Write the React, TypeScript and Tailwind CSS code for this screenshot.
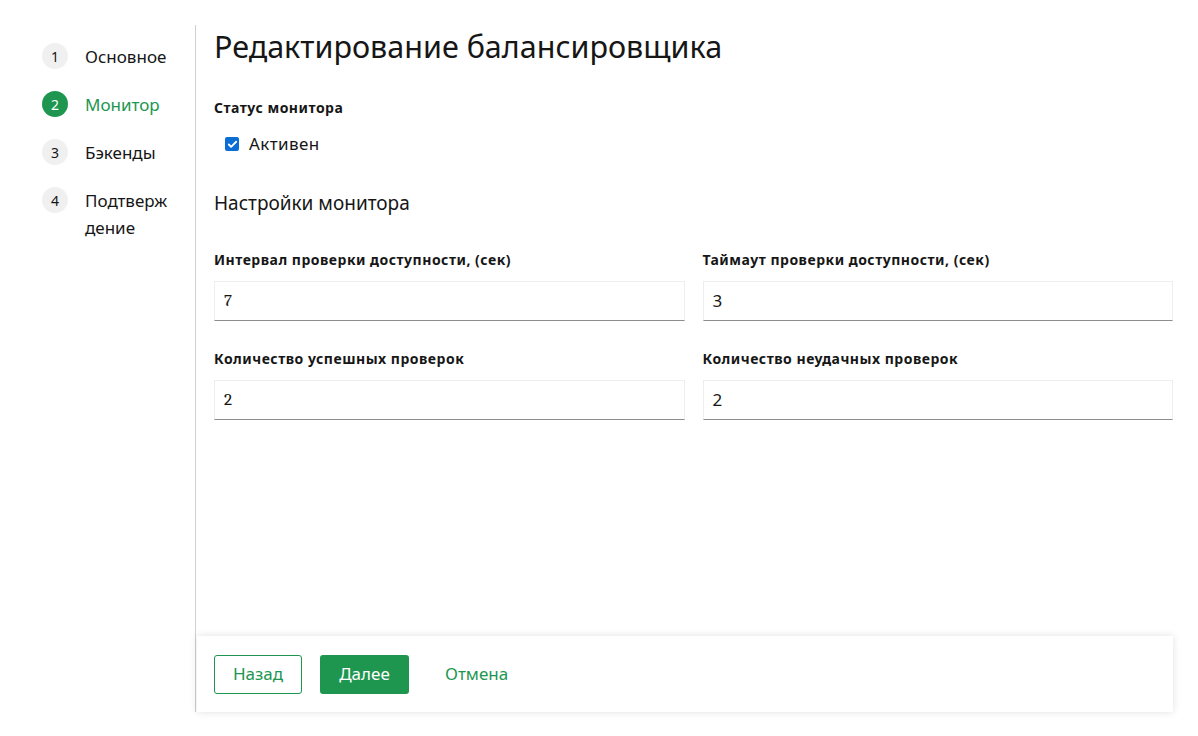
import { Check } from "lucide-react"

const steps = [
  { n: 1, label: "Основное" },
  { n: 2, label: "Монитор", active: true },
  { n: 3, label: "Бэкенды" },
  { n: 4, label: "Подтверж дение" },
]

const Field = ({ label, value, serif }: { label: string; value: string; serif?: boolean }) => (
  <div className="flex flex-col">
    <label className="text-[14px] font-bold leading-[20px] tracking-[0.5px] text-[#161616]">{label}</label>
    <div className="mt-[11px] h-[40px] flex items-center px-[9px] bg-white border border-[#eeeeee] border-b-[#8d8d8d] text-[17px] text-[#161616]">
      <span className={serif ? "font-serif" : "font-sans"}>{value}</span>
    </div>
  </div>
)

export default function App() {
  return (
    <div className="w-[1198px] h-[736px] bg-white font-['Noto_Sans',sans-serif] text-[#161616] pt-[25px]">
      <div className="flex h-[687px]">
        <aside className="w-[196px] border-r border-[#d0d0d0] pl-[42px] pt-[18px] flex flex-col gap-[21px]">
          {steps.map((s) => (
            <div key={s.n} className="flex items-start">
              <div
                className={`w-[26px] h-[26px] rounded-full flex items-center justify-center text-[14px] shrink-0 ${s.active ? "bg-[#1e9650] text-white" : "bg-[#f0f0f0] text-[#161616]"}`}
              >
                {s.n}
              </div>
              <span
                className={`ml-[17px] text-[17px] leading-[27px] w-[90px] ${s.active ? "text-[#1e9650]" : "text-[#161616]"}`}
              >
                {s.label}
              </span>
            </div>
          ))}
        </aside>

        <main className="flex-1 flex flex-col">
          <div className="flex-1 pl-[18px] pr-[25px]">
            <h1 className="text-[30.5px] font-normal leading-[40px] mt-[1px]">Редактирование балансировщика</h1>

            <div className="mt-[32px] text-[14px] font-bold leading-[20px] tracking-[0.5px]">Статус монитора</div>
            <label className="mt-[15px] ml-[11px] flex items-center gap-[10px]">
              <span className="w-[14px] h-[14px] rounded-[2px] bg-[#0b6ed4] flex items-center justify-center">
                <Check className="w-[11px] h-[11px] text-white" strokeWidth={4} />
              </span>
              <span className="text-[17px] leading-[22px] tracking-[0.4px]">Активен</span>
            </label>

            <h2 className="mt-[35px] text-[19px] leading-[26px]">Настройки монитора</h2>

            <div className="mt-[34px] grid grid-cols-2 gap-x-[18px] gap-y-[28px]">
              <Field label="Интервал проверки доступности, (сек)" value="7" serif />
              <Field label="Таймаут проверки доступности, (сек)" value="3" />
              <Field label="Количество успешных проверок" value="2" serif />
              <Field label="Количество неудачных проверок" value="2" />
            </div>
          </div>

          <footer className="h-[76px] mr-[25px] ml-[1px] bg-white shadow-[0_0_8px_rgba(0,0,0,0.12)] flex items-center pl-[17px] gap-[18px]">
            <button className="h-[39px] w-[88px] rounded-[3px] border border-[#1e9650] text-[#1e9650] text-[17px]">
              Назад
            </button>
            <button className="h-[39px] w-[89px] rounded-[3px] bg-[#1e9650] text-white text-[17px]">
              Далее
            </button>
            <button className="h-[39px] px-[18px] text-[#1e9650] text-[17px]">Отмена</button>
          </footer>
        </main>
      </div>
    </div>
  )
}
